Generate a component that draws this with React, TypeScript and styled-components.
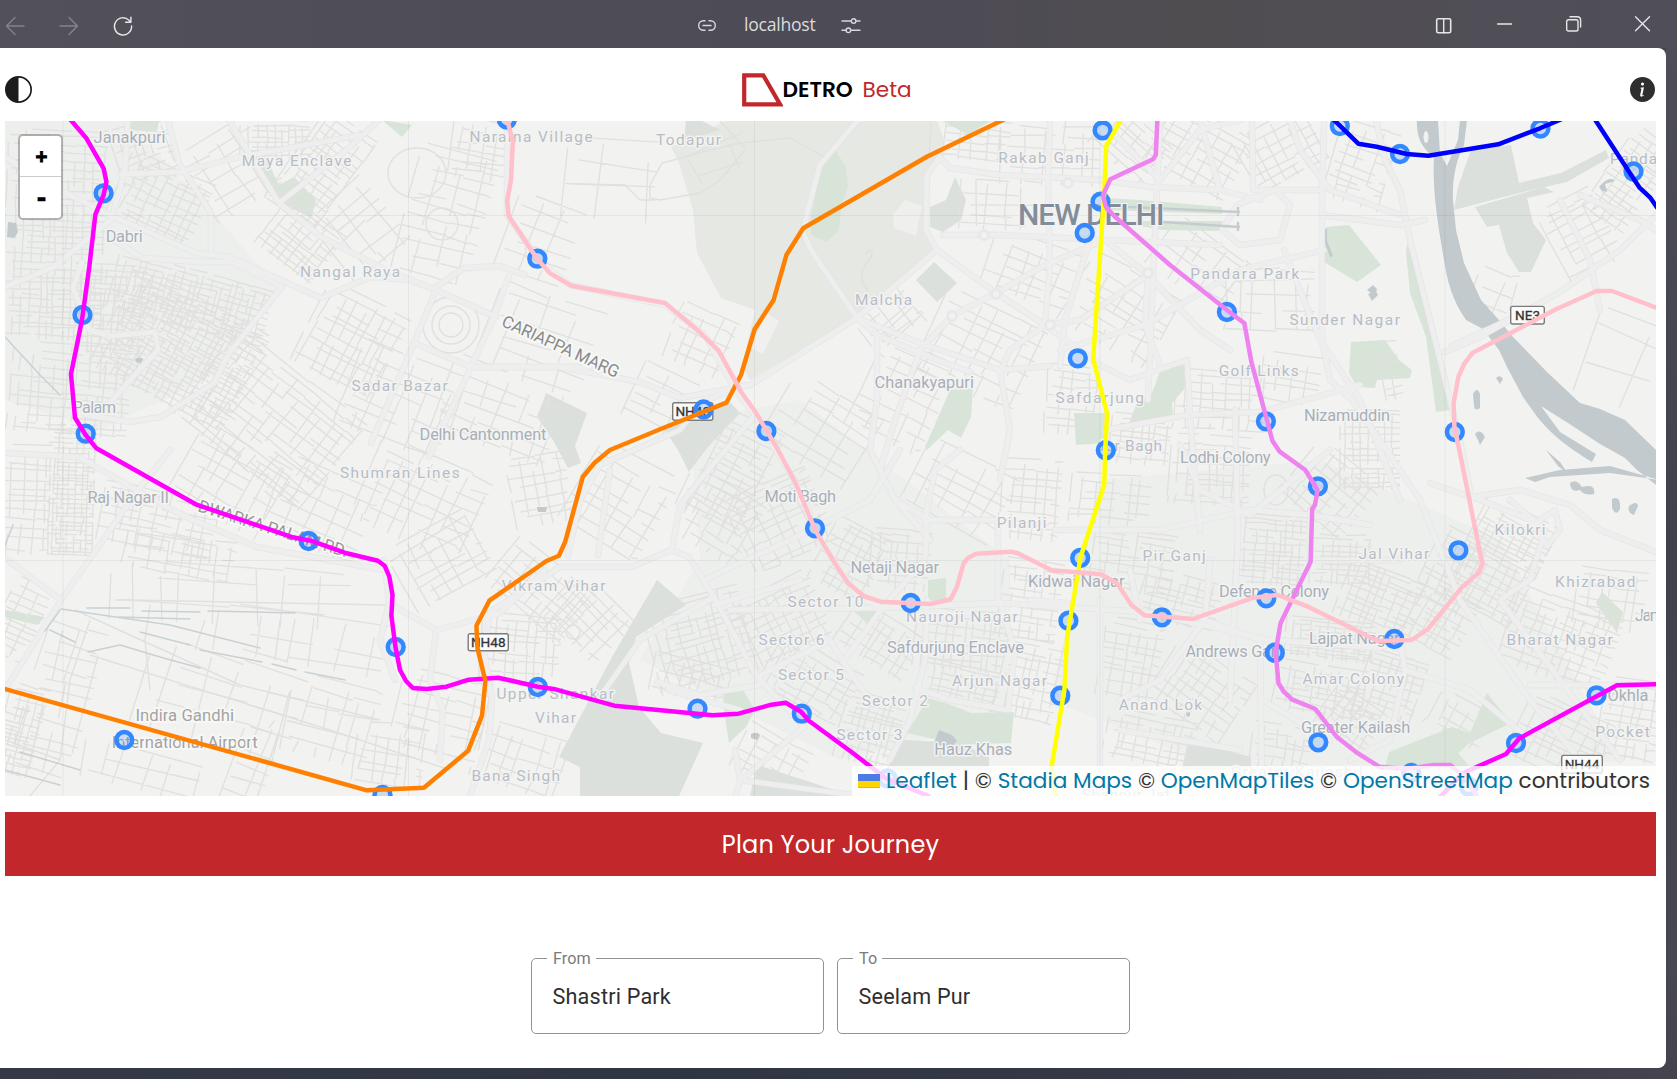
import React from "react";
import styled, { createGlobalStyle, css } from "styled-components";
import { BsCircleHalf, BsInfoCircleFill } from "react-icons/bs";

const GlobalStyle = createGlobalStyle`
  *, *::before, *::after { box-sizing: border-box; }
  html, body { margin: 0; padding: 0; }
  body { font-family: Inter, "Open Sans", sans-serif; overflow: hidden; }
`;

const brand = "#c1272b";

const poppinsLike = css`
  font-family: Poppins, Inter, sans-serif;
  font-feature-settings: "cv11";
`;

/* ---------- window chrome ---------- */

const Window = styled.div`
  width: 1677px;
  height: 1079px;
  display: flex;
  flex-direction: column;
  background:
    linear-gradient(90deg, #525059 0%, #4e4c56 30%, #4d4b55 55%, #504d51 70%, #504e56 88%, #4f4e5a 100%) top / 100% 48px no-repeat,
    linear-gradient(180deg, #4f4e5a 0%, #41414e 50%, #474653 90%, #43424e 100%) right / 11px 100% no-repeat,
    linear-gradient(90deg, #353947 0%, #303544 40%, #373a47 80%, #454350 100%);
`;

const TitleBar = styled.div`
  height: 48px;
  flex: none;
  display: grid;
  grid-template-columns: 691px auto 1fr;
  align-items: center;
  padding: 0 27px 0 6px;
`;

const BarGroup = styled.div<{ $gap: number; $end?: boolean }>`
  display: flex;
  align-items: center;
  gap: ${(p) => p.$gap}px;
  justify-content: ${(p) => (p.$end ? "flex-end" : "flex-start")};
`;

const Address = styled.div`
  display: flex;
  align-items: center;
  gap: 28px;
  padding: 3px 0 0 1px;
`;

const Host = styled.span`
  font-family: "Segoe UI", "Open Sans", "Noto Sans", sans-serif;
  font-size: 17.6px;
  line-height: 24px;
  color: #dcdbde;
  width: 70px;
  margin-top: -4px;
  white-space: nowrap;
  letter-spacing: -0.25px;
`;

const Glyph = styled.svg<{ $tone?: string; $shift?: number }>`
  display: block;
  overflow: visible;
  fill: none;
  stroke: ${(p) => p.$tone ?? "#e6e6e8"};
  stroke-width: 1.4;
  stroke-linecap: round;
  stroke-linejoin: round;
  margin-top: ${(p) => p.$shift ?? 0}px;
`;

/* ---------- page ---------- */

const Page = styled.main`
  width: 1666px;
  height: 1020px;
  display: flex;
  flex-direction: column;
  background: #fff;
  border-radius: 0 8px 8px 0;
  padding: 0 10px 0 5px;
`;

const Header = styled.header`
  height: 73px;
  flex: none;
  display: flex;
  align-items: center;
  justify-content: space-between;
  padding: 10px 1px 0 0;
`;

const Brand = styled.div`
  display: flex;
  align-items: center;
  ${poppinsLike}
  font-size: 21.6px;
  line-height: 34px;
  color: #000;
  margin-right: 10px;
`;

const BrandName = styled.strong`
  font-weight: 600;
  width: 72px;
`;

const BrandTag = styled.span`
  color: ${brand};
  font-weight: 400;
  margin-left: 8px;
  width: 48px;
`;

const MapFrame = styled.section`
  position: relative;
  height: 675px;
  flex: none;
  overflow: hidden;
  background: #f2f3f1;
`;

const MapCanvas = styled.svg`
  display: block;
  width: 1651px;
  height: 675px;
  font-family: Roboto, sans-serif;
`;

const ZoomControl = styled.div`
  position: absolute;
  left: 13px;
  top: 13px;
  width: 45px;
  display: flex;
  flex-direction: column;
  border: 2px solid rgba(0, 0, 0, 0.25);
  border-radius: 5px;
  background: #fff;
  background-clip: padding-box;
`;

const ZoomButton = styled.button<{ $divided?: boolean }>`
  height: 41px;
  border: 0;
  padding: 0 0 0 2px;
  background: none;
  border-bottom: ${(p) => (p.$divided ? "1px solid #ccc" : "0")};
  font: 700 ${(p) => (p.$divided ? 19 : 24)}px/40px "DejaVu Sans Mono", monospace;
  -webkit-text-stroke: ${(p) => (p.$divided ? 0.9 : 0.4)}px #000;
  color: #000;
`;

const Attribution = styled.div`
  position: absolute;
  right: 0;
  bottom: 0;
  width: 804px;
  height: 30px;
  display: flex;
  align-items: center;
  padding-left: 6px;
  background: rgba(255, 255, 255, 0.8);
  ${poppinsLike}
  font-size: 21.6px;
  line-height: 30px;
  color: #333;
  white-space: nowrap;
`;

const Credit = styled.span`
  color: #0078a8;
`;

const Flag = styled.svg`
  display: block;
  flex: none;
  margin-right: 6px;
`;

const PlanBar = styled.div`
  margin-top: 16px;
  height: 64px;
  flex: none;
  display: flex;
  align-items: center;
  justify-content: center;
  background: ${brand};
  color: #fff;
  ${poppinsLike}
  font-size: 24px;
  letter-spacing: 0.2px;
`;

const Form = styled.form`
  display: flex;
  justify-content: center;
  gap: 13px;
  margin-top: 73px;
`;

const Field = styled.fieldset`
  width: 293px;
  height: 85px;
  margin: 0;
  min-width: 0;
  border: 1px solid #929292;
  border-radius: 5px;
  padding: 0 20px 0 15px;
  font-family: Roboto, sans-serif;
`;

const FieldLabel = styled.legend`
  padding: 0 5px 0 6px;
  font-size: 16.2px;
  line-height: 19px;
  letter-spacing: 0.1px;
  color: #7b7b7b;
`;

const FieldValue = styled.div`
  padding-left: 5.5px;
  margin-top: 16px;
  font-size: 21.6px;
  line-height: 26px;
  letter-spacing: 0.2px;
  color: #2e2e2e;
`;

/* ---------- map data ---------- */

const lines: { color: string; pts: string }[] = [
  { color: "#ffff00", pts: "1121,120 1106.2,146 1104.2,193 1093.2,359 1107,413 1105,457 1104.2,485 1080.6,557 1067.2,637 1064.4,690 1051.4,768 1056,797" },
  { color: "#ff00ff", pts: "69,118 86.4,138.3 103.6,168.3 106.4,181.7 103.6,195 95.4,214.3 89.3,266.7 82,320 71,374 75,417.7 85.7,435 96.4,448.3 195.7,504.3 292.9,537.3 310.7,540.7 344.6,552.7 377.9,560.7 384.6,565.7 389.3,576.7 392.5,595 391.4,615.7 395.4,646.7 400,670 406,681 412.9,688 426.8,689 446.4,686.7 468.9,679.7 498.2,677.7 537.9,686.7 555.4,689.3 614.3,705.7 712.5,715.3 738.6,713.7 771.4,704.7 785.7,702.7 801,711.7 808.9,720.7 851.8,752.3 885.7,778.3 928.6,796" },
  { color: "#ff00ff", pts: "1656,684.3 1616.9,685.3 1519.4,738.3 1506,754 1462.5,773.3 1440,797" },
  { color: "#ff8000", pts: "4,688.7 366.8,790.3 423.9,787.7 468.2,750.7 482,715.7 485.4,681 477.5,648.3 476.4,625.7 489.3,600.7 546.4,561 558.9,555.7 565,542.3 582.9,476.7 594.6,462.7 610,450 660.7,429 726.4,402.7 741,375 754.6,329.3 773.6,300 786.4,255 803.2,228.3 926.8,156.7 1005,119" },
  { color: "#ee82ee", pts: "1157.4,119 1155.8,155 1153,159.3 1110.3,179.3 1103,195 1105.8,206.7 1115,216.7 1170,265 1231,313.3 1244.4,323.3 1251.3,361.7 1272.4,440.7 1279.7,451.7 1305.3,470 1317.5,490 1315,505 1312.2,509.3 1310.6,561.7 1280.5,623.3 1275.6,652.3 1278.5,683.3 1283.8,691.7 1291.9,699.3 1315.4,709 1336.6,736.7 1356.9,752.7 1379.2,766.7 1405.6,769 1434,765 1450.3,765 1466.6,778.3 1476.7,796" },
  { color: "#ffc0cb", pts: "507,119 512.9,141.7 511,180 507.1,201 508.6,216 537.5,259.3 550,273.3 571.4,285.7 665,303 700,332.3 718.6,350.7 741,391.7 755.7,412.3 778,450 795.7,483.3 816,531.7 833.9,561.7 848.2,583.3 863.6,596 880.4,601.7 930.4,604 950.7,599.3 957,586.7 963.6,563.3 968,558 976,553.7 1011.4,551.7 1017.9,553.3 1051.8,570.3 1101,574.3 1117,583.3 1131.4,605 1144.4,615.3 1193,619 1253.3,597.7 1277.7,595 1308,606.7 1378,641 1411.7,640 1428,629 1462.5,586.7 1478.8,572.7 1482.8,563.3 1480.8,556.7 1459.3,450 1454.4,426.7 1453.6,403.3 1458.4,376.7 1464.5,363.3 1472.7,352.7 1556,309.3 1596.6,291 1612,291 1657,308" },
  { color: "#0000ff", pts: "1333,119 1358.3,143.7 1376.7,146.7 1406.7,154 1428.3,155.7 1498.3,144.3 1540,128.3 1562,119" },
  { color: "#0000ff", pts: "1594,118 1630,173.3 1639.3,187.3 1650,197.3 1657,207.5" },
];

const stations: [number, number][] = [
  [103.6, 193.3], [82.5, 315], [85.7, 433.7], [506.8, 119.5], [537.3, 258.7], [308.6, 541], [395.7, 647],
  [124.3, 740], [382.5, 795], [537.8, 687], [703.6, 409.5], [766.4, 431], [815, 528.3], [910.7, 603],
  [697.5, 708.7], [801.8, 713.7], [887.5, 778.5], [1102.6, 130.3], [1100.5, 201.7], [1084.7, 233],
  [1077.8, 358.3], [1105.8, 450.3], [1226.9, 312], [1265.9, 421.3], [1339.8, 126], [1400, 154],
  [1540.5, 128.5], [1633.5, 171.5], [1454.8, 432], [1317.9, 486.3], [1080.2, 558], [1068.4, 620.7],
  [1060.3, 695.7], [1161.9, 617.3], [1266.3, 598.3], [1458.4, 550.3], [1394.3, 639], [1274.8, 652.7],
  [1318.3, 742.3], [1411.3, 773], [1516, 743], [1596.6, 695.3], [1468.6, 786.5],
];

type Place = [string, number, number, number];

const towns: Place[] = [
  ["Janakpuri", 93.6, 142.7, 72], ["Dabri", 105.7, 242.3, 37], ["Palam", 72.5, 412.7, 43.5],
  ["Delhi Cantonment", 419.6, 439.7, 126.8], ["Raj Nagar II", 87.5, 503, 81.4], ["Chanakyapuri", 874.6, 387.7, 99.3],
  ["Moti Bagh", 764.6, 501.7, 71.4], ["Netaji Nagar", 850.4, 573, 88.6], ["Kidwai Nagar", 1027.9, 587.3, 96.6],
  ["Safdurjung Enclave", 887, 653.3, 137], ["Hauz Khas", 934.3, 755.3, 78], ["Nizamuddin", 1304, 421, 86],
  ["Lodhi Colony", 1180, 463.3, 90.6], ["Defence Colony", 1219, 597, 110], ["Jam", 1635, 620.7, 29],
  ["Lajpat Nagar", 1309, 644.3, 90.6], ["Andrews Ganj", 1185.4, 657, 98], ["Okhla", 1607.5, 700.7, 41],
  ["Greater Kailash", 1301, 733, 109.3],
];

const suburbs: Place[] = [
  ["Maya Enclave", 241.8, 166, 109.6], ["Nangal Raya", 300, 277.3, 100], ["Sadar Bazar", 351.4, 391, 96.4],
  ["Naraina Village", 469.6, 142.3, 123], ["Todapur", 656, 145, 65], ["Shumran Lines", 340, 478.3, 119.6],
  ["Vikram Vihar", 501.8, 591.3, 103.6], ["Upper Shankar", 496.4, 699, 117.6], ["Vihar", 535, 723.3, 41],
  ["Bana Singh", 471.4, 781.3, 88.6], ["Malcha", 855, 305, 57], ["Pilanji", 996.8, 527.7, 49.6],
  ["Sector 10", 787.5, 607.3, 76], ["Nauroji Nagar", 906, 621.7, 111.8], ["Sector 6", 758.6, 645, 65.7],
  ["Sector 5", 777.9, 680, 66], ["Arjun Nagar", 952, 686, 95], ["Sector 2", 861.8, 705.7, 66],
  ["Sector 3", 836.4, 740, 66], ["Rakab Ganj", 998.2, 163.3, 90.6], ["Pandara Park", 1190.3, 279.3, 109],
  ["Sunder Nagar", 1289.4, 325.3, 110.5], ["Golf Links", 1218.7, 375.7, 80], ["Safdarjung", 1055.4, 403.3, 88.6],
  ["Jor Bagh", 1096, 451, 66], ["Panda", 1610, 164, 47], ["Pir Ganj", 1142.4, 560.7, 63.4],
  ["Jal Vihar", 1358.5, 559.3, 70.7], ["Kilokri", 1494.6, 535, 51], ["Khizrabad", 1555, 586.7, 80.4],
  ["Bharat Nagar", 1506.4, 645, 106.4], ["Amar Colony", 1302.4, 684, 101.6], ["Anand Lok", 1118.8, 710, 83.3],
  ["Pocket", 1595.3, 736.7, 54.4], ["Greater Kailash I", 1231, 776.7, 132], ["Shahpur Jat", 1081.8, 800, 88],
];

const shields: [string, number, number, number, number][] = [
  ["NH48", 467.5, 633, 41.5, 18.5], ["NH48", 672, 402, 41.5, 19], ["NE3", 1510, 305.7, 35, 19], ["NH44", 1561, 754.7, 42, 19],
];

const ridge = "671,147 728,120 937,120 944,140 927,187 928,230 937,248 857,317 750,380 742,366 755,310 721,298 697,253 693,210 679,163";

const greens = [
  "834,148 846,167 848,187 841,207 839,230 827,242 811,235 811,217 820,170",
  "941,120 993,120 968,135",
  "950,390 973,388 971,417 961,438 948,430 927,450 925,447",
  "723,693 743,690 755,710 746,727 729,743 725,717",
  "928,698 946,703 971,713 1014,712 1011,743 961,745 907,733",
  "928,580 946,578 946,603 928,600",
  "852,610 880,608 868,623",
  "127,120 159,120 157,132 128,130",
  "382,120 412,125 402,137",
  "251,150 262,150 279,185 294,177 316,200 311,218 291,208 268,190",
  "5,610 45,617 37,625 5,617",
  "1326,227 1349,225 1381,265 1357,282 1324,262",
  "1407,243 1422,287 1452,397 1450,410 1436,412 1426,337 1410,293 1406,253",
  "1351,342 1385,340 1399,360 1412,370 1410,378 1377,380 1375,388 1357,387 1349,373",
  "1162,366 1187,365 1186,387 1172,403 1173,420 1129,423 1137,403 1152,393",
  "1074,413 1105,413 1105,443 1076,445",
  "1105,198 1140,200 1222,207 1222,214 1105,210",
  "1112,221 1222,221 1222,231 1163,230",
  "1487,693 1511,723 1470,743 1458,753 1470,767 1385,767 1389,752 1452,727 1470,733",
  "1602,592 1623,612 1617,633 1596,603",
];

const woods = [
  "955,177 966,200 961,220 943,232 930,227 930,207 946,200",
  "934,262 957,283 937,302 916,280",
  "546,393 587,413 575,446 581,463 568,468 553,440 537,417",
  "728,400 740,413 707,448 689,472 678,450 665,430",
  "657,580 686,605 636,637 629,663 639,707 661,733 703,743 679,796 580,796 580,767 559,757 612,657",
  "904,740 961,743 989,757 989,770 886,770",
  "757,765 804,780 852,796 750,796",
  "1471,150 1511,145 1519,183 1561,173 1606,150 1609,158 1567,182 1519,193 1454,210 1458,187",
  "1475,207 1544,187 1554,192 1527,198 1533,223 1546,240 1531,272 1519,272 1507,253 1499,225 1487,227",
  "1188,740 1251,757 1251,770 1182,770",
  "686,120 700,120 720,130 684,141",
];

const water = [
  "M1417 120C1416 140 1424 150 1434 157C1432 190 1438 225 1444 260C1447 280 1452 300 1466 320L1483 329L1499 350L1507 367L1523 397L1538 418C1556 440 1576 452 1592 462L1596 454L1560 432L1541 406L1568 423L1600 444L1625 458L1637 470L1656 485V450L1625 420L1600 409L1580 403L1548 373L1513 337L1499 320L1481 300L1464 263L1456 230L1453 200C1452 180 1456 160 1464 145L1467 120H1460L1458 140L1447 166L1440 153L1438 120Z",
  "M1525 478L1560 470L1610 466L1660 480L1610 473L1550 477L1535 482Z",
  "M1546 450L1560 462L1568 474L1558 466Z",
  "M1570 483q6-5 12 4q14-4 12 7q-10 2-14-4q-10 3-10-7Z",
  "M1612 499q9-4 8 10q-4 8-8-1ZM1629 506q8-6 9 0l-4 9q-7-2-5-9Z",
  "M1473 394q4-8 7 0v14q-5 4-6-2ZM1475 434q5-6 10 3l-5 8-2-5Z",
  "M1496 378q4-4 7 1l-3 5ZM1599 187q10-12 16-6l-10 3 2 8-5-1Z",
  "M934 743L939 730L952 735L957 741L950 748Z",
  "M8 222l8 1 2 9-4 6-7-1ZM135 359q4-3 8 0l-2 4-5-1Z",
  "M1325 229l2 0 0 12 6 15-3 1-5-14Z",
  "M1367 290l6-5 4 4-2 7ZM1368 294l8-3 2 4-6 6Z",
  "M751 734q6-3 9 1l-3 5-6-2ZM1186 713l4-1 0 4-3 1Z",
  "M537 507l10 0-1 5-8 0Z",
];

const arterials = [
  "5,157 64,192 114,217 196,253 229,257 321,298 371,277 410,280 436,290",
  "229,120 279,203 321,237 386,270 436,290 496,317",
  "279,203 350,147 379,120", "168,120 179,163 211,213 211,250",
  "5,287 54,267 86,240 111,220 125,170 128,120", "121,174 180,172 235,158 360,135",
  "114,240 143,258 200,262 232,262 282,287 229,353 214,383 161,417 129,422 86,415",
  "82,262 73,288 90,330 110,336 155,332 158,350 130,380 108,405",
  "436,290 414,343 371,443", "414,343 471,367 590,367", "511,270 493,320 471,367 429,457",
  "436,287 464,268 500,266 525,275", "471,367 560,367 640,382 680,398",
  "507,119 507,215 540,262 570,285 665,305 705,335 735,390 755,415 800,490 820,540 860,600 890,607",
  "470,796 489,740 492,700 484,650 490,612 560,567 632,567 671,550 689,557 714,597 757,677 786,707 804,727",
  "568,556 580,500 600,465 680,430 700,403 745,385", "804,727 741,780 735,796",
  "384,560 389,603 436,630 500,613 545,570", "389,603 380,640 395,680", "436,630 430,680 443,710 440,760",
  "170,450 136,493 61,600 5,690", "5,453 79,457 168,508 193,520 257,547 384,570", "5,558 61,600",
  "680,398 750,385 857,318 937,250", "857,318 813,253 803,233", "803,233 808,210 820,165 858,120",
  "755,415 700,480 680,505 672,550", "610,470 598,555",
  "940,157 927,175 926,230 937,250 996,293 1045,325 1100,365 1130,380 1187,360",
  "940,157 950,168 1000,175 1100,180 1150,187 1220,190 1260,200",
  "943,235 1000,235 1105,240 1220,245", "857,318 925,345 1000,370 1050,366",
  "857,318 877,335 930,357 970,372", "877,335 877,400 870,450 895,500 930,540",
  "1045,325 1050,265 1048,180 1050,120", "996,293 1045,265 1105,240", "996,293 952,316 920,350 895,420 880,470",
  "1045,325 1010,350 1000,372", "1000,370 1010,430 1000,480", "1093,230 1065,320 1060,366",
  "1105,240 1148,275 1200,330 1230,350", "1148,275 1080,320 1045,325", "1148,275 1145,325 1160,365",
  "1145,325 1060,350", "1145,325 1240,270 1324,250", "1237,205 1275,190 1290,205 1280,240 1240,245 1222,230 1237,205",
  "1200,120 1220,190", "1252,120 1253,190 1322,190", "1100,120 1160,180", "1160,180 1200,130 1240,120",
  "1324,120 1322,200 1322,340 1330,380 1352,400 1400,470 1420,500 1460,600 1530,700 1610,796",
  "1284,250 1320,340 1360,400 1400,500", "1160,120 1153,280 1148,400",
  "1376,120 1385,160 1400,190 1410,240 1430,320 1450,400 1462,450 1470,490",
  "1290,120 1300,150 1330,190 1400,215", "1322,215 1400,225 1425,220",
  "1106,430 1187,415 1260,412 1360,385", "1187,360 1190,415 1200,530", "1235,410 1238,540 1230,700",
  "730,610 882,608 1000,603 1144,612 1270,640 1380,648", "843,662 882,608 925,560 927,520",
  "1068,603 1030,600", "998,603 998,520 930,520 895,500", "925,520 935,470 960,450",
  "927,600 925,660 910,720 890,760", "915,688 950,700 1008,710 1015,650 1000,603",
  "757,677 830,640 843,662 870,700", "714,597 640,640 605,690", "704,580 790,540 870,500 900,450",
  "714,605 800,580", "657,682 700,695 760,685", "668,690 740,710",
  "735,750 740,780 860,796", "1055,530 1160,530 1250,510 1310,515 1370,525",
  "1180,445 1200,490 1250,515 1330,450", "1310,515 1310,560 1400,560",
  "1200,618 1260,640 1262,796", "1210,560 1205,620 1160,680 1120,700", "1130,570 1140,620",
  "1400,640 1405,670 1470,690 1530,740", "1530,685 1656,685", "1405,670 1390,740 1350,760",
  "1262,700 1330,740", "1120,730 1240,750", "1100,600 1100,796",
  "1445,352 1480,337 1560,292 1620,250 1656,215", "1452,346 1540,305",
  "1430,483 1470,497 1520,490 1570,505 1600,530 1656,552",
  "1510,500 1545,530 1530,580 1500,600 1620,760", "1540,520 1555,510 1560,530 1548,545 1530,520 1470,496",
  "1580,195 1640,220 1656,230", "1560,200 1590,260 1600,310",
];

const runways = [
  "61,609 170,625 260,648", "87,608 130,608", "142,611 200,612", "208,611 295,613", "119,617 190,619",
  "140,632 190,645", "200,650 262,662", "272,664 296,670", "305,672 345,680", "50,630 75,642", "88,652 120,645 160,657 200,668",
  "45,631 60,610", "5,770 60,785", "20,752 80,770", "5,545 13,525", "5,337 40,375 60,395",
];

/* Neighbourhood street grids: centre x, centre y, width, height, angle, spacing. */
const districts: number[][] = [
  [55, 235, 100, 210, 2, 6], [70, 390, 120, 90, 5, 7], [180, 350, 150, 110, 28, 4.6], [110, 310, 70, 90, 4, 5.5],
  [190, 300, 160, 60, 15, 5], [145, 150, 60, 60, -20, 8], [160, 200, 90, 70, 25, 6.5], [230, 170, 80, 80, -32, 13],
  [275, 140, 70, 40, 0, 6], [320, 170, 60, 110, 36, 6], [300, 240, 70, 60, 38, 6], [360, 230, 70, 80, -40, 14],
  [445, 215, 80, 130, 15, 11], [480, 150, 60, 60, 8, 10], [540, 240, 70, 80, 20, 13], [270, 420, 160, 110, 38, 10],
  [350, 340, 90, 90, 28, 9], [400, 400, 110, 90, 22, 12], [500, 410, 120, 80, 20, 13], [540, 340, 110, 90, 20, 18],
  [70, 490, 50, 130, 2, 3.6], [25, 500, 50, 110, 3, 9], [150, 520, 130, 60, 12, 9], [230, 480, 100, 80, 30, 12],
  [180, 555, 110, 40, 10, 9], [320, 510, 100, 80, 24, 11], [420, 500, 120, 90, 25, 13], [440, 560, 90, 70, -30, 13],
  [20, 620, 40, 80, 25, 8], [20, 730, 40, 90, 15, 6], [540, 490, 60, 70, -10, 9], [540, 590, 100, 60, 40, 8],
  [620, 500, 90, 90, 30, 13], [520, 650, 80, 70, 5, 9], [590, 620, 70, 60, 45, 9], [440, 715, 90, 80, 14, 13],
  [520, 760, 90, 60, 18, 12], [390, 755, 70, 60, 8, 10], [700, 340, 60, 60, 24, 10], [660, 400, 60, 60, 26, 14],
  [730, 470, 70, 110, 26, 9], [780, 520, 90, 80, -25, 8], [720, 520, 70, 70, 30, 8], [700, 640, 100, 90, -15, 8],
  [780, 620, 90, 70, -25, 7.5], [810, 680, 90, 60, 30, 8], [850, 560, 60, 70, 28, 8], [900, 560, 60, 60, 5, 7],
  [880, 640, 80, 50, 32, 8], [960, 640, 90, 60, 6, 7], [960, 685, 80, 40, 12, 6], [870, 730, 60, 70, 15, 6.5],
  [690, 680, 80, 40, 15, 9], [770, 760, 70, 50, 30, 9], [820, 430, 100, 80, 32, 13], [900, 400, 80, 90, 25, 12],
  [890, 320, 60, 50, -40, 9], [980, 350, 110, 90, 25, 15], [960, 490, 100, 70, 28, 15], [1030, 500, 60, 80, 5, 8],
  [1030, 600, 60, 80, 8, 7], [1030, 680, 60, 80, 12, 7], [970, 140, 80, 40, 5, 9], [1050, 150, 100, 70, 2, 12],
  [1000, 205, 80, 50, 2, 12], [1030, 270, 90, 60, 20, 14], [1130, 145, 70, 50, 40, 8], [1200, 150, 90, 70, 30, 9],
  [1280, 150, 80, 60, -28, 8], [1360, 165, 60, 80, 18, 9], [1120, 310, 100, 80, 30, 13], [1200, 265, 90, 60, 35, 12],
  [1270, 300, 90, 60, 0, 13], [1070, 400, 50, 70, 5, 9], [1140, 440, 60, 50, 6, 7], [1220, 400, 90, 60, 3, 9],
  [1210, 470, 80, 70, 3, 7.5], [1290, 380, 60, 50, 10, 12], [1370, 450, 60, 80, 0, 5.5], [1330, 490, 80, 70, 40, 7.5],
  [1110, 500, 80, 50, 5, 9], [1130, 560, 90, 60, 8, 8], [1180, 600, 80, 50, 15, 7.5], [1270, 550, 70, 70, 4, 5.5],
  [1340, 560, 60, 50, 3, 6.5], [1380, 600, 80, 60, 22, 6], [1440, 620, 60, 60, 30, 7], [1450, 570, 50, 80, 26, 8],
  [1500, 560, 80, 110, 28, 6.5], [1560, 640, 110, 80, 20, 7], [1610, 600, 70, 60, 8, 9], [1330, 640, 90, 40, 6, 5],
  [1320, 690, 90, 50, 10, 6.5], [1390, 690, 60, 70, 18, 6.5], [1200, 690, 90, 70, 35, 9], [1130, 660, 60, 80, 10, 8],
  [1150, 740, 90, 50, 12, 7], [1280, 750, 60, 50, 10, 7.5], [1350, 720, 60, 50, 35, 7], [1460, 720, 60, 40, 30, 10],
  [1560, 740, 90, 70, 25, 8], [1630, 720, 60, 80, 10, 9], [1630, 180, 50, 100, 35, 6.5], [1580, 235, 60, 80, -28, 10],
  [1620, 360, 70, 90, 20, 28], [1390, 370, 20, 60, -8, 10], [1490, 300, 40, 60, 20, 14], [720, 160, 60, 30, -20, 22],
  [610, 180, 90, 80, 5, 32], [220, 700, 160, 90, 16, 20], [300, 640, 170, 50, 10, 22], [60, 700, 60, 150, 15, 15],
  [140, 770, 120, 40, 14, 16], [250, 770, 110, 40, -70, 16], [330, 720, 90, 80, 14, 14], [230, 595, 240, 60, 3, 22],
];

function makeStreets(): string {
  let seed = 20731;
  const rnd = () => {
    seed = (seed * 1103515245 + 12345) % 2147483648;
    return seed / 2147483648;
  };
  const out: string[] = [];
  for (const [cx, cy, w, h, angle, gap] of districts) {
    const a = (angle * Math.PI) / 180;
    const put = (u: number, v: number) =>
      `${(cx + u * Math.cos(a) - v * Math.sin(a)).toFixed(1)} ${(cy + u * Math.sin(a) + v * Math.cos(a)).toFixed(1)}`;
    const sweep = (span: number, length: number, flip: boolean, step: number) => {
      for (let o = -span / 2; o < span / 2; o += step * (0.6 + rnd() * 0.9)) {
        let s = -length / 2 + rnd() * length * 0.25;
        while (s < length / 2 - 5) {
          const e = Math.min(length / 2, s + gap * (2 + rnd() * 5));
          const bend = (rnd() - 0.5) * gap * 0.45;
          out.push(flip ? `M${put(o, s)}L${put(o + bend, e)}` : `M${put(s, o)}L${put(e, o + bend)}`);
          s = e + (rnd() < 0.45 ? gap * (0.8 + rnd()) : 0);
        }
      }
    };
    sweep(h, w, false, gap);
    sweep(w, h, true, gap * 1.35);
  }
  return out.join("");
}

const streetPath = makeStreets();

function TransitMap() {
  return (
    <MapCanvas viewBox="5 121 1651 675">
      <rect x="5" y="121" width="1651" height="675" fill="#f2f3f1" />
      <g fill="#eaebe9" opacity="0.55">
        <polygon points="5,121 125,121 215,215 280,290 225,370 100,430 5,400" />
        <polygon points="690,420 800,400 1010,560 1010,720 840,760 640,660 700,560" />
        <polygon points="1100,480 1320,460 1500,540 1620,760 1290,796 1050,700" />
      </g>
      <polygon points={ridge} fill="#e6e8e4" />
      <g fill="#d9e4d9">{greens.map((p) => <polygon key={p} points={p} />)}</g>
      <g fill="#dbe0dc">{woods.map((p) => <polygon key={p} points={p} />)}</g>
      <polygon points="905,200 922,206 916,236 894,228 893,214" fill="#efefed" />
      <polygon points="766,313 779,321 763,354 751,348" fill="#f0f0ee" />
      <path d={streetPath} fill="none" stroke="#e0e0de" strokeWidth="1.35" />
      <g fill="none" stroke="#e0e0de" strokeWidth="1.4">
        {[12, 19, 28].map((r) => <circle key={r} cx="451" cy="325" r={r} />)}
        <ellipse cx="417" cy="173" rx="29" ry="25" />
        <ellipse cx="1276" cy="490" rx="12" ry="15" />
        <circle cx="442" cy="224" r="16" />
        <circle cx="573" cy="632" r="7" />
        <path d="M650 185L662 163L710 150L740 143L790 138L825 157M650 185V198L660 200L700 193L720 180L745 150M575 184L625 185L640 200L655 200M720 121L745 148" />
        <path d="M865 254q10-8 6 4q-12 10-8 26l6 8" />
        <path d="M5 740L60 760M90 620L70 680L60 760L30 796M150 605L145 640L150 690M205 620L195 650M280 620L275 660M115 600L130 600L385 605M75 610L240 685L380 720M90 655L330 730L450 770" />
      </g>
      <path d={water.join("")} fill="#c2cacd" />
      <ellipse cx="1426" cy="137" rx="2.5" ry="6" fill="#f0f1ef" />
      <g fill="none" strokeLinejoin="round" strokeLinecap="round">
        <g stroke="#e3e4e4" strokeWidth="6.4" opacity="0.8">{arterials.map((p) => <polyline key={p} points={p} />)}</g>
        <g stroke="#eeeeef" strokeWidth="5">{arterials.map((p) => <polyline key={p} points={p} />)}</g>
        <g stroke="#c9d1d4" strokeWidth="1.5">{runways.map((p) => <polyline key={p} points={p} />)}</g>
        <path d="M1129 207L1239 212M1163 222L1239 227M1238 208v7M1238 223v7" stroke="#c5cccd" strokeWidth="2.4" />
        <g stroke="#e8e8e9" strokeWidth="3" fill="#f2f2f2">
          {[[996, 294], [952, 316], [1148, 273], [1068, 183], [984, 235], [1050, 325]].map(([x, y]) => (
            <circle key={`${x}-${y}`} cx={x} cy={y} r="4.5" />
          ))}
        </g>
        <path d="M5 215.5H1656M5 560.5H1656M63 121V796M408.5 121V796M754.5 121V796M1100 121V796M1445 121V796" stroke="#000" strokeOpacity="0.05" strokeWidth="1" />
      </g>

      <g fontSize="15.4" stroke="#f3f3f2" strokeWidth="3" strokeLinejoin="round" paintOrder="stroke">
        <g fill="#a8afb8">
          {towns.map(([t, x, y, w]) => <text key={t} x={x} y={y} textLength={w} fontSize="16.4">{t}</text>)}
        </g>
        <g fill="#b7bdc6">
          {suburbs.map(([t, x, y, w]) => <text key={t} x={x} y={y} textLength={w}>{t}</text>)}
        </g>
        <g fill="#a3a3a3" fontSize="16.8" stroke="#f7f7f6" strokeWidth="4">
          <text x="135.4" y="720.7" textLength="98.6">Indira Gandhi</text>
          <text x="111.8" y="747.7" textLength="146">International Airport</text>
          <text transform="translate(500.5 325.5) rotate(24.5)" textLength="127" fill="#8a8a8a" fontSize="17">CARIAPPA MARG</text>
          <text transform="translate(197 511) rotate(17.3)" textLength="156" fill="#979797" fontSize="17">DWARKA PALAM RD.</text>
        </g>
        <text x="1018" y="225" textLength="146.5" fontSize="30" fontWeight="500" fill="#838d9a" strokeWidth="2">NEW DELHI</text>
      </g>
      {shields.map(([t, x, y, w, h]) => (
        <g key={`${t}-${x}`}>
          <rect x={x + 0.7} y={y + 0.7} width={w - 1.4} height={h - 1.4} rx="2" fill="#fafafa" stroke="#7c7c7c" strokeWidth="1.4" />
          <text x={x + w / 2} y={y + 14} textAnchor="middle" fontSize="13.6" fill="#333" stroke="#333" strokeWidth="0.3">{t}</text>
        </g>
      ))}

      <g stroke="#3388ff" strokeWidth="4.5" fill="#3388ff" fillOpacity="0.22">
        {stations.map(([x, y]) => <circle key={`${x}-${y}`} cx={x} cy={y} r="7.9" />)}
      </g>
      <g fill="none" strokeWidth="4.5" strokeLinecap="round" strokeLinejoin="round">
        {lines.map((l) => <polyline key={l.pts} points={l.pts} stroke={l.color} />)}
      </g>
    </MapCanvas>
  );
}

export default function App() {
  return (
    <>
      <GlobalStyle />
      <Window>
        <TitleBar>
          <BarGroup $gap={36}>
            <Glyph width="18" height="18" $tone="#84828b" $shift={3}><path d="M18 9H.8M9 .5L.5 9L9 17.5" /></Glyph>
            <Glyph width="18" height="18" $tone="#84828b" $shift={3}><path d="M0 9H17.2M9 .5L17.5 9L9 17.5" /></Glyph>
            <Glyph width="18" height="18" $shift={4}><path d="M17.6 9A8.6 8.6 0 1 1 15 3.2L16.8 5M16.9 .2V5.2H11.6" /></Glyph>
          </BarGroup>
          <Address>
            <Glyph width="18" height="11" $tone="#d8d8db"><path d="M7 .7H5.5a4.8 4.8 0 0 0 0 9.6H7M11 .7h1.5a4.8 4.8 0 0 1 0 9.6H11M5 5.5h8" /></Glyph>
            <Host>localhost</Host>
            <Glyph width="18" height="15" $tone="#d8d8db"><path d="M0 3h9M14 3h4M0 12.3h4M9 12.3h9" /><circle cx="11.6" cy="3" r="2.3" /><circle cx="6.4" cy="12.3" r="2.3" /></Glyph>
          </Address>
          <BarGroup $gap={0} $end>
            <Glyph width="61" height="16" $shift={4}><rect x=".7" y=".7" width="14" height="14" rx="1.5" strokeWidth="1.6" /><path d="M7.7 1v14" /></Glyph>
            <Glyph width="69" height="16" $shift={-1}><path d="M.5 8H14.5" /></Glyph>
            <Glyph width="69" height="16" $shift={-1}><rect x=".7" y="3.7" width="11.3" height="11.3" rx="1.8" /><path d="M4 .7h7.2a3.4 3.4 0 0 1 3.4 3.4V11" /></Glyph>
            <Glyph width="15" height="16" $shift={-1}><path d="M.5 .8L14.5 14.8M14.5 .8L.5 14.8" /></Glyph>
          </BarGroup>
        </TitleBar>
        <Page>
          <Header>
            <BsCircleHalf size={27} color="#1c1c1c" />
            <Brand>
              <svg width="41" height="34" viewBox="0 0 41 34">
                <path d="M2.2 2.4H21.3L38 31.3H2.2Z" fill="none" stroke={brand} strokeWidth="4.2" strokeLinejoin="miter" />
              </svg>
              <BrandName>DETRO</BrandName>
              <BrandTag>Beta</BrandTag>
            </Brand>
            <BsInfoCircleFill size={25} color="#2e2e2e" />
          </Header>
          <MapFrame>
            <TransitMap />
            <ZoomControl>
              <ZoomButton $divided>+</ZoomButton>
              <ZoomButton>-</ZoomButton>
            </ZoomControl>
            <Attribution>
              <Flag width="22" height="14"><path fill="#4c7be1" d="M0 0h22v7H0z" /><path fill="#ffd500" d="M0 7h22v7H0z" /><path fill="#e0bc00" d="M0 13h22v1H0z" /></Flag>
              <span>
                <Credit>Leaflet</Credit> | © <Credit>Stadia Maps</Credit> © <Credit>OpenMapTiles</Credit> ©{" "}
                <Credit>OpenStreetMap</Credit> contributors
              </span>
            </Attribution>
          </MapFrame>
          <PlanBar>Plan Your Journey</PlanBar>
          <Form>
            <Field>
              <FieldLabel>From</FieldLabel>
              <FieldValue>Shastri Park</FieldValue>
            </Field>
            <Field>
              <FieldLabel>To</FieldLabel>
              <FieldValue>Seelam Pur</FieldValue>
            </Field>
          </Form>
        </Page>
      </Window>
    </>
  );
}
